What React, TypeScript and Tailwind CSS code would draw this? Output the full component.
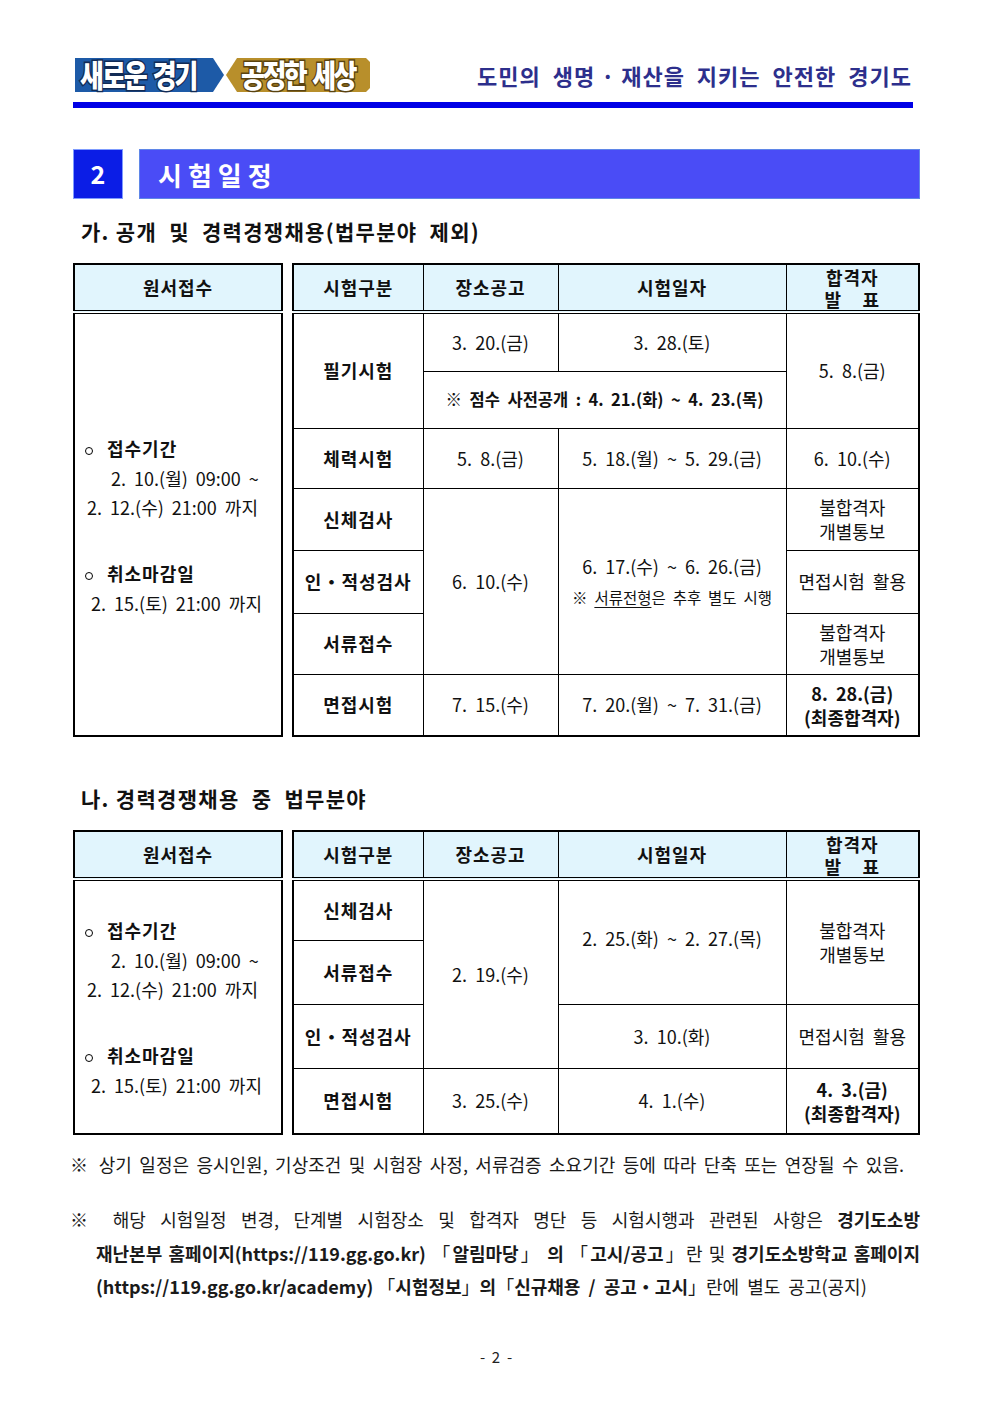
import React from "react";

const cell = "border border-black text-center align-middle whitespace-pre";
const head = "border border-black border-b-4 border-double text-center align-middle font-bold tracking-[1px] bg-[#e1f5fd]";
const label = "font-bold tracking-[1px]";

function Logo() {
  return (
    <svg width="296" height="36" viewBox="0 0 296 36" overflow="visible">
      <polygon points="0,1 138,1 149,18 138,35 0,35" fill="#1d5aa7" />
      <polygon points="151,18 162,1 291,1 295,5 295,31 291,35 162,35" fill="#b88f2b" />
      <text
        transform="translate(5 30) scale(1 1.2)"
        fontSize="26"
        fontWeight="900"
        letterSpacing="-2"
        fill="#ffffff"
        stroke="#122b55"
        strokeWidth="2.5"
        paintOrder="stroke"
        fontFamily="Noto Sans CJK KR, sans-serif"
      >
        <tspan>새로운</tspan>
        <tspan dx="7">경기</tspan>
      </text>
      <text
        transform="translate(166 30) scale(1 1.2)"
        fontSize="26"
        fontWeight="900"
        letterSpacing="-2.5"
        fill="#ffffff"
        stroke="#5a4310"
        strokeWidth="2.5"
        paintOrder="stroke"
        fontFamily="Noto Sans CJK KR, sans-serif"
      >
        <tspan>공정한</tspan>
        <tspan dx="7">세상</tspan>
      </text>
    </svg>
  );
}

function Dot() {
  return <span className="inline-block w-[8px] h-[8px] rounded-full border border-black mr-[14px] align-middle" />;
}

// 원서접수 column, same in both tables
function ApplyTable({ body }: { body: number }) {
  return (
    <table className="w-[212px] table-fixed border-collapse border-2 border-black">
      <thead>
        <tr>
          <th className={`${head} h-[48px]`}>원서접수</th>
        </tr>
      </thead>
      <tbody>
        <tr>
          <td className="border border-black align-middle" style={{ height: body }}>
            <div className="flex flex-col leading-[29px] whitespace-pre">
              <div className="pl-[10px] h-[32px] leading-[32px]">
                <Dot />
                <span className={label}>접수기간</span>
              </div>
              <div className="pl-[36px]">{"2.  10.(월)  09:00  ~"}</div>
              <div className="pl-[12px]">{"2.  12.(수)  21:00  까지"}</div>
              <div className="pl-[10px] h-[32px] leading-[32px] mt-[35px]">
                <Dot />
                <span className={label}>취소마감일</span>
              </div>
              <div className="pl-[16px]">{"2.  15.(토)  21:00  까지"}</div>
            </div>
          </td>
        </tr>
      </tbody>
    </table>
  );
}

function HeadRow() {
  return (
    <thead>
      <tr>
        <th className={`${head} h-[48px]`}>시험구분</th>
        <th className={head}>장소공고</th>
        <th className={head}>시험일자</th>
        <th className={`${head} leading-[22px] whitespace-pre`}>{"합격자\n발    표"}</th>
      </tr>
    </thead>
  );
}

function Cols() {
  return (
    <colgroup>
      <col className="w-[130px]" />
      <col className="w-[135px]" />
      <col className="w-[228px]" />
      <col className="w-[133px]" />
    </colgroup>
  );
}

function Notify() {
  return (
    <div className="leading-[24px]">
      불합격자
      <br />
      개별통보
    </div>
  );
}

function Final({ date }: { date: string }) {
  return (
    <div className="font-bold leading-[24px]">
      {date}
      <br />
      (최종합격자)
    </div>
  );
}

function Table1() {
  return (
    <div className="flex gap-[9px]">
      <ApplyTable body={424} />
      <table className="w-[626px] table-fixed border-collapse border-2 border-black">
        <Cols />
        <HeadRow />
        <tbody>
          <tr>
            <td rowSpan={2} className={`${cell} ${label}`}>필기시험</td>
            <td className={`${cell} h-[59px]`}>{"3.  20.(금)"}</td>
            <td className={cell}>{"3.  28.(토)"}</td>
            <td rowSpan={2} className={cell}>{"5.  8.(금)"}</td>
          </tr>
          <tr>
            <td colSpan={2} className={`${cell} h-[57px] font-bold text-[16.5px]`}>
              {"※  점수  사전공개  :  4.  21.(화)  ~  4.  23.(목)"}
            </td>
          </tr>
          <tr>
            <td className={`${cell} ${label} h-[60px]`}>체력시험</td>
            <td className={cell}>{"5.  8.(금)"}</td>
            <td className={cell}>{"5.  18.(월)  ~  5.  29.(금)"}</td>
            <td className={cell}>{"6.  10.(수)"}</td>
          </tr>
          <tr>
            <td className={`${cell} ${label} h-[62px]`}>신체검사</td>
            <td rowSpan={3} className={cell}>{"6.  10.(수)"}</td>
            <td rowSpan={3} className={cell}>
              <div className="leading-[26px]">{"6.  17.(수)  ~  6.  26.(금)"}</div>
              <div className="text-[15.5px] leading-[24px] mt-[6px]">
                {"※  "}
                <span className="underline underline-offset-[3px]">서류전형</span>
                {"은  추후  별도  시행"}
              </div>
            </td>
            <td className={cell}>
              <Notify />
            </td>
          </tr>
          <tr>
            <td className={`${cell} ${label} h-[63px]`}>인・적성검사</td>
            <td className={cell}>{"면접시험  활용"}</td>
          </tr>
          <tr>
            <td className={`${cell} ${label} h-[61px]`}>서류접수</td>
            <td className={cell}>
              <Notify />
            </td>
          </tr>
          <tr>
            <td className={`${cell} ${label} h-[62px]`}>면접시험</td>
            <td className={cell}>{"7.  15.(수)"}</td>
            <td className={cell}>{"7.  20.(월)  ~  7.  31.(금)"}</td>
            <td className={cell}>
              <Final date={"8.  28.(금)"} />
            </td>
          </tr>
        </tbody>
      </table>
    </div>
  );
}

function Table2() {
  return (
    <div className="flex gap-[9px]">
      <ApplyTable body={255} />
      <table className="w-[626px] table-fixed border-collapse border-2 border-black">
        <Cols />
        <HeadRow />
        <tbody>
          <tr>
            <td className={`${cell} ${label} h-[61px]`}>신체검사</td>
            <td rowSpan={3} className={cell}>{"2.  19.(수)"}</td>
            <td rowSpan={2} className={cell}>
              <div className="-mt-[8px]">{"2.  25.(화)  ~  2.  27.(목)"}</div>
            </td>
            <td rowSpan={2} className={cell}>
              <Notify />
            </td>
          </tr>
          <tr>
            <td className={`${cell} ${label} h-[64px]`}>서류접수</td>
          </tr>
          <tr>
            <td className={`${cell} ${label} h-[64px]`}>인・적성검사</td>
            <td className={cell}>{"3.  10.(화)"}</td>
            <td className={cell}>{"면접시험  활용"}</td>
          </tr>
          <tr>
            <td className={`${cell} ${label} h-[66px]`}>면접시험</td>
            <td className={cell}>{"3.  25.(수)"}</td>
            <td className={cell}>{"4.  1.(수)"}</td>
            <td className={cell}>
              <Final date={"4.  3.(금)"} />
            </td>
          </tr>
        </tbody>
      </table>
    </div>
  );
}

export default function App() {
  return (
    <div className="w-[992px] min-h-[1403px] bg-white text-[#111] text-[18px] font-['Noto_Sans_CJK_KR',sans-serif]">
      <div className="pl-[73px] w-[920px] pt-[57px]">
        {/* header */}
        <div className="flex items-center justify-between pr-[8px]">
          <div className="ml-[2px]">
            <Logo />
          </div>
          <div className="text-[22px] font-bold text-[#2d2f8c] tracking-[1px] whitespace-pre">
            {"도민의  생명 · 재산을  지키는  안전한  경기도"}
          </div>
        </div>
        <div className="mt-[9px] h-[6px] w-[840px] bg-[#0000e6]" />

        {/* section title */}
        <div className="mt-[41px] flex gap-[16px] h-[50px]">
          <div className="w-[50px] h-[50px] bg-[#0b1de6] border border-[#7f9cff] flex items-center justify-center text-white text-[25px] font-bold">
            2
          </div>
          <div className="flex-1 h-[50px] bg-[#4a4cf6] border border-[#5f86e8] flex items-center pl-[18px] text-white text-[26px] font-bold tracking-[6px]">
            시험일정
          </div>
        </div>

        <div className="mt-[17px] h-[30px] leading-[30px] pl-[8px] text-[21px] font-bold tracking-[1.3px] whitespace-pre">
          {"가. 공개  및  경력경쟁채용(법무분야  제외)"}
        </div>
        <div className="mt-[17px]">
          <Table1 />
        </div>

        <div className="mt-[46px] h-[30px] leading-[30px] pl-[8px] text-[21px] font-bold tracking-[1.3px] whitespace-pre">
          {"나. 경력경쟁채용  중  법무분야"}
        </div>
        <div className="mt-[17px]">
          <Table2 />
        </div>

        {/* notes */}
        <div className="-ml-[3px] w-[850px] text-[18px] text-[#1a1a1a]">
          <div className="mt-[15px] w-[834px] h-[28px] leading-[28px] text-justify [text-align-last:justify]">
            ※ 상기 일정은 응시인원, 기상조건 및 시험장 사정, 서류검증 소요기간 등에 따라 단축 또는 연장될 수 있음.
          </div>
          <div className="mt-[25px] leading-[33.5px]">
            <div className="text-justify [text-align-last:justify]">
              ※ 해당 시험일정 변경, 단계별 시험장소 및 합격자 명단 등 시험시행과 관련된 사항은{" "}
              <b>경기도소방</b>
            </div>
            <div className="pl-[26px] text-justify [text-align-last:justify]">
              <b>재난본부 홈페이지(https://119.gg.go.kr)</b> 「<b>알림마당</b>」 <b>의</b> 「<b>고시/공고</b>」란 및{" "}
              <b>경기도소방학교 홈페이지</b>
            </div>
            <div className="pl-[26px] whitespace-pre">
              <b>(https://119.gg.go.kr/academy)</b>
              {" 「"}
              <b>시험정보</b>
              {"」"}
              <b>의</b>
              {"「"}
              <b>{"신규채용  /  공고・고시"}</b>
              {"」란에  별도  공고(공지)"}
            </div>
          </div>
        </div>
      </div>
      <div className="mt-[41px] text-center text-[15px] leading-[24px] text-[#222] whitespace-pre">{"-  2  -"}</div>
    </div>
  );
}
